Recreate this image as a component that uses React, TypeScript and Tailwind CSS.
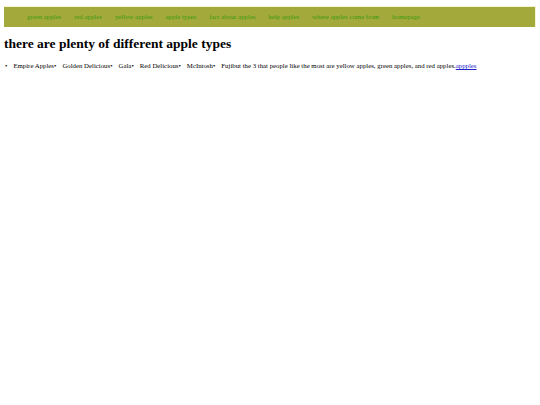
const links = [
  "green apples",
  "red apples",
  "yellow apples",
  "apple types",
  "fact about apples",
  "help apples",
  "where apples come from",
  "homepage",
]

const types = ["Empire Apples", "Golden Delicious", "Gala", "Red Delicious", "McIntosh"]

function App() {
  return (
    <div className="min-h-[405px] bg-white px-[4px] pt-[6px] text-black" style={{ fontFamily: '"Liberation Serif", "Times New Roman", serif' }}>
      <nav className="h-[21px] border-t border-r border-[#f4f5cf] bg-[#a3aa3b]">
        <ul className="flex h-full items-center gap-x-[13px] pl-[23px] text-[6.8px] text-[#3a9a10]">
          {links.map((l) => (
            <li key={l}>{l}</li>
          ))}
        </ul>
      </nav>

      <h1 className="mt-[8px] text-[13.5px] font-bold leading-[18px]">there are plenty of different apple types</h1>

      <div className="mt-[8px] flex items-center text-[6.8px] leading-[10px]">
        <span className="ml-[1px] mr-[6px]">•</span>
        {types.map((t) => (
          <span key={t} className="mr-[6px]">
            {t}•
          </span>
        ))}
        <span>
          Fujibut the 3 that people like the most are yellow apples, green apples, and red apples.<a href="#" className="text-[#2020cc] underline">appples</a>
        </span>
      </div>
    </div>
  )
}

export default App
